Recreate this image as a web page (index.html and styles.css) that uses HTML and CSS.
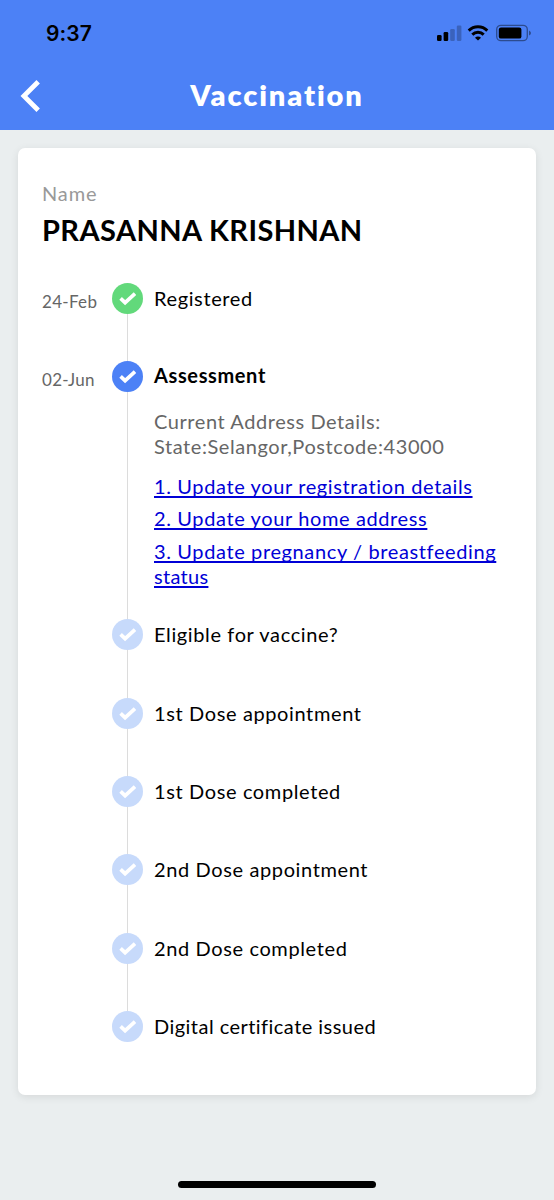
FILE: index.html
```html
<!DOCTYPE html>
<html lang="en">
<head>
<meta charset="utf-8">
<title>Vaccination</title>
<link rel="stylesheet" href="styles.css">
</head>
<body>
<svg class="defs" aria-hidden="true"><symbol id="check" viewBox="0 0 31 31"><path d="M8.600 15.400l4.500 4.300 9.900-9" fill="none" stroke="#fff" stroke-width="3.700"/></symbol></svg>
<header class="header">
  <div class="status-bar">
    <span class="time">9:37</span>
    <svg class="indicators" width="96" height="20" viewBox="0 0 96 20">
      <rect x="1" y="12" width="4.6" height="6" rx="1.2"/>
      <rect x="7.6" y="9" width="4.6" height="9" rx="1.2"/>
      <g opacity=".23"><rect x="14.2" y="6" width="4.6" height="12" rx="1.2"/><rect x="20.8" y="2.5" width="4.6" height="15.5" rx="1.2"/></g>
      <g fill="none" stroke="#000" stroke-width="2.9"><path d="M32.7 7.6a13.2 13.2 0 0 1 18.6 0"/><path d="M36.3 11.6a8.1 8.1 0 0 1 11.4 0"/></g>
      <path d="M42 17.6l-3-2.8a4.2 4.2 0 0 1 6 0z"/>
      <rect x="60.7" y="2.3" width="30.6" height="15.4" rx="4.2" fill="none" stroke="#000" stroke-opacity=".42" stroke-width="1.3"/>
      <rect x="62.8" y="4.4" width="22.6" height="11.2" rx="2.2"/>
      <path d="M93 7.5q2 1 2 2.5t-2 2.5z" opacity=".42"/>
    </svg>
  </div>
  <div class="title-bar">
    <svg class="back" width="22" height="34" viewBox="0 0 22 34"><path d="M20.200 2.700L5.900 17l14.300 14.300" fill="none" stroke="#fff" stroke-width="4.800"/></svg>
    <h1 class="title">Vaccination</h1>
  </div>
</header>
<main class="card">
  <div class="label">Name</div>
  <h2 class="name">PRASANNA KRISHNAN</h2>
  <ol class="timeline">
    <li class="step done"><span class="date">24-Feb</span><span class="marker"><svg class="dot"><use href="#check"/></svg></span><div class="content"><span class="text">Registered</span></div></li>
    <li class="step current"><span class="date">02-Jun</span><span class="marker"><svg class="dot"><use href="#check"/></svg></span>
      <div class="content">
        <span class="text">Assessment</span>
        <p class="address">Current Address Details:<br>State:Selangor,Postcode:43000</p>
        <a class="link" href="#">1. Update your registration details</a>
        <a class="link" href="#">2. Update your home address</a>
        <a class="link" href="#">3. Update pregnancy / breastfeeding<br><span class="link-tail">status</span></a>
      </div></li>
    <li class="step"><span class="date"></span><span class="marker"><svg class="dot"><use href="#check"/></svg></span><div class="content"><span class="text">Eligible for vaccine?</span></div></li>
    <li class="step"><span class="date"></span><span class="marker"><svg class="dot"><use href="#check"/></svg></span><div class="content"><span class="text">1st Dose appointment</span></div></li>
    <li class="step"><span class="date"></span><span class="marker"><svg class="dot"><use href="#check"/></svg></span><div class="content"><span class="text">1st Dose completed</span></div></li>
    <li class="step"><span class="date"></span><span class="marker"><svg class="dot"><use href="#check"/></svg></span><div class="content"><span class="text">2nd Dose appointment</span></div></li>
    <li class="step"><span class="date"></span><span class="marker"><svg class="dot"><use href="#check"/></svg></span><div class="content"><span class="text">2nd Dose completed</span></div></li>
    <li class="step"><span class="date"></span><span class="marker"><svg class="dot"><use href="#check"/></svg></span><div class="content"><span class="text certificate">Digital certificate issued</span></div></li>
  </ol>
</main>
<div class="home-indicator"></div>
</body>
</html>
```
FILE: styles.css
```css
* { box-sizing: border-box; }
body {
  margin: 0;
  height: 1200px;
  display: flex;
  flex-direction: column;
  background: #eaeeef;
  font-family: Lato, "Liberation Sans", sans-serif;
  color: #000;
  overflow: hidden;
}
.defs { position: absolute; width: 0; height: 0; }
.header { height: 130px; background: #4c81f6; flex: none; }
.status-bar {
  height: 66px;
  padding: 0 22px 0 46px;
  display: flex;
  justify-content: space-between;
  align-items: center;
}
.time { font: 600 21px/24px Inter, sans-serif; letter-spacing: 0.1px; padding-top: 1px; }
.indicators { display: block; }
.title-bar {
  height: 64px;
  padding: 0 18px;
  display: grid;
  grid-template-columns: 22px 1fr 22px;
  align-items: center;
}
.back { display: block; margin-top: -5px; }
.title {
  margin: -7px 0 0;
  text-align: center;
  color: #fff;
  font-size: 29px;
  line-height: 36px;
  font-weight: 800;
  letter-spacing: 1.900px;
}
.card {
  flex: none;
  margin: 18px 18px 0;
  height: 947px;
  padding: 32px 24px 0;
  background: #fff;
  border-radius: 7px;
  box-shadow: 0 2px 8px rgba(0, 0, 0, 0.09);
}
.label { font-size: 20px; line-height: 26px; color: #999; letter-spacing: 0.9px; }
.name { margin: 5px 0 0; font-size: 29px; line-height: 38px; font-weight: 700; letter-spacing: 0.420px; white-space: nowrap; }
.timeline { list-style: none; margin: 33.600px 0 0; padding: 0; }
.step { display: grid; grid-template-columns: 70px 31px 1fr; min-height: 78.300px; }
.current { min-height: 258.500px; }
.date { padding-top: 8px; font-size: 17px; line-height: 22px; color: #666; letter-spacing: 0.3px; }
.marker { display: flex; flex-direction: column; align-items: center; }
.marker::after { content: ""; flex: 1; width: 1.500px; background: #dcdcdc; }
.step:last-child .marker::after { display: none; }
.dot { display: block; width: 31px; height: 31px; border-radius: 50%; background: #c7dafb; }
.done .dot { background: #62d97b; }
.current .dot { background: #4c81f6; }
.content { padding: 3px 0 0 11px; font-size: 20px; line-height: 25.500px; letter-spacing: 0.620px; white-space: nowrap; }
.text { display: block; }
.certificate { letter-spacing: 0.460px; }
.current .text { font-weight: 700; margin-top: -1px; }
.address { margin: 20.500px 0 0; color: #666; letter-spacing: 0.570px; }
.link { display: block; margin-top: 7px; color: #0000d6; text-decoration-thickness: 1.500px; text-underline-offset: 2px; text-decoration-skip-ink: none; }
.link-tail { letter-spacing: 0.300px; }
.address + .link { margin-top: 14px; }
.home-indicator { width: 198px; height: 7px; border-radius: 4px; background: #000; margin: 86px auto 0; flex: none; }
```
